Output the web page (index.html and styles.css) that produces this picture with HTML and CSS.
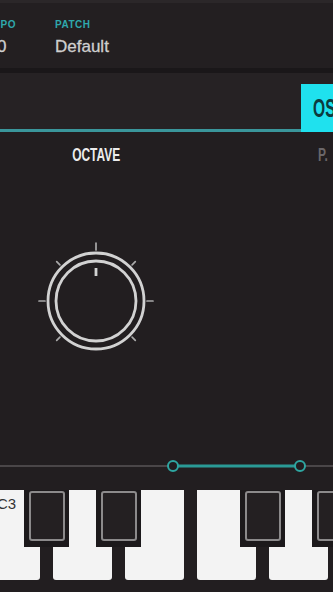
FILE: index.html
```html
<!DOCTYPE html>
<html>
<head>
<meta charset="utf-8">
<link rel="stylesheet" href="styles.css">
</head>
<body>
<div class="screen">
  <header class="header">
    <div class="field field-tempo">
      <div class="field-label">TEMPO</div>
      <div class="field-value">120</div>
    </div>
    <div class="field">
      <div class="field-label">PATCH</div>
      <div class="field-value">Default</div>
    </div>
  </header>
  <div class="divider"></div>
  <nav class="tabbar">
    <div class="tab tab-active"><span class="tab-text">OSC</span></div>
  </nav>
  <main class="main">
    <div class="params">
      <div class="param">
        <div class="param-label"><span class="cond">OCTAVE</span></div>
        <svg class="knob" width="120" height="120" viewBox="0 0 120 120">
          <g stroke="#a9a9a9" stroke-width="1.7" stroke-linecap="round">
            <line x1="60" y1="9" x2="60" y2="2"/>
            <line x1="23.9" y1="23.9" x2="20.7" y2="20.7"/>
            <line x1="96.1" y1="23.9" x2="99.3" y2="20.7"/>
            <line x1="9" y1="60" x2="3" y2="60"/>
            <line x1="111" y1="60" x2="117" y2="60"/>
            <line x1="23.9" y1="96.1" x2="20.7" y2="99.3"/>
            <line x1="96.1" y1="96.1" x2="99.3" y2="99.3"/>
          </g>
          <circle cx="60" cy="60" r="48" fill="none" stroke="#d2d2d2" stroke-width="2.8"/>
          <circle cx="60" cy="60" r="40" fill="none" stroke="#d2d2d2" stroke-width="2.8"/>
          <line x1="60" y1="27" x2="60" y2="35" stroke="#d2d2d2" stroke-width="2.8"/>
        </svg>
      </div>
      <div class="param param-second">
        <div class="param-label param-label-dim"><span class="cond">P.</span></div>
      </div>
    </div>
    <svg class="range" width="333" height="14" viewBox="0 0 333 14">
      <line x1="0" y1="7" x2="333" y2="7" stroke="#4a4648" stroke-width="2"/>
      <line x1="173" y1="7" x2="300" y2="7" stroke="#2a9a96" stroke-width="3"/>
      <circle cx="173" cy="7" r="5" fill="#211d1f" stroke="#2ea6a1" stroke-width="2"/>
      <circle cx="300" cy="7" r="5" fill="#211d1f" stroke="#2ea6a1" stroke-width="2"/>
    </svg>
    <div class="keyboard">
      <div class="white-key"><span class="note">C3</span></div>
      <div class="white-key"></div>
      <div class="white-key"></div>
      <div class="white-key"></div>
      <div class="white-key"></div>
      <div class="black-key bk1"><div class="black-inner"></div></div>
      <div class="black-key bk2"><div class="black-inner"></div></div>
      <div class="black-key bk3"><div class="black-inner"></div></div>
      <div class="black-key bk4"><div class="black-inner"></div></div>
    </div>
  </main>
</div>
</body>
</html>
```

FILE: styles.css
```css
html, body {
  margin: 0;
  padding: 0;
  background: #221e20;
}

.screen {
  width: 333px;
  height: 592px;
  overflow: hidden;
  background: #221e20;
  font-family: "Liberation Sans", Arial, sans-serif;
}

.header {
  height: 68px;
  box-sizing: border-box;
  border-top: 3px solid #2b2729;
  background: #231f21;
  padding-top: 16px;
  display: flex;
}

.field-tempo {
  margin-left: -22px;
  width: 77px;
  flex: none;
}

.field-label {
  font-size: 10px;
  line-height: 12px;
  font-weight: bold;
  letter-spacing: 0.5px;
  color: #2fa8ac;
}

.field-value {
  margin-top: 6px;
  font-size: 17px;
  line-height: 20px;
  color: #cfcfcf;
  -webkit-text-stroke: 0.3px #cfcfcf;
}

.divider {
  height: 5px;
  background: #1a1719;
}

.tabbar {
  height: 59px;
  box-sizing: border-box;
  background: #262224;
  border-bottom: 3px solid #3a969b;
  display: flex;
  justify-content: flex-end;
  align-items: flex-end;
}

.tab {
  height: 48px;
  margin-bottom: -3px;
  width: 62px;
  margin-right: -30px;
  box-sizing: border-box;
  padding-left: 12px;
  display: flex;
  align-items: center;
  background: #1fe1ee;
  flex: none;
}

.tab-text {
  display: inline-block;
  font-size: 26px;
  font-weight: bold;
  color: #0c3a3e;
  transform: scaleX(0.6);
  transform-origin: left center;
}

.main {
  padding-top: 13px;
  display: flex;
  flex-direction: column;
}

.params {
  display: flex;
  height: 216px;
}

.param {
  width: 120px;
  margin-left: 36px;
  display: flex;
  flex-direction: column;
  align-items: center;
  flex: none;
}

.param-second {
  margin-left: 162px;
  width: 40px;
  align-items: flex-start;
}

.param-label {
  height: 20px;
  font-size: 19px;
  line-height: 20px;
  font-weight: bold;
  color: #ececec;
  white-space: nowrap;
}

.param-label-dim {
  color: #6b6769;
}

.cond {
  display: inline-block;
  transform: scaleX(0.63);
}

.param-second .cond {
  transform-origin: left center;
}

.knob {
  display: block;
  margin-top: 76px;
}

.range {
  display: block;
  margin-top: 98px;
}

.keyboard {
  position: relative;
  margin-top: 17px;
  margin-left: -19px;
  height: 90px;
  display: flex;
  gap: 13px;
}

.white-key {
  width: 59px;
  flex: none;
  height: 90px;
  background: #f3f3f3;
  border-radius: 0 0 3px 3px;
  box-sizing: border-box;
  padding: 5px 0 0 16px;
}

.note {
  font-size: 15px;
  line-height: 16px;
  color: #333;
}

.black-key {
  position: absolute;
  top: 0;
  width: 45px;
  height: 57px;
  box-sizing: border-box;
  padding: 1px 4px 6px 5px;
  background: #1c191b;
}

.bk1 { left: 43px; }
.bk2 { left: 115px; }
.bk3 { left: 259px; }
.bk4 { left: 331px; }

.black-inner {
  height: 100%;
  box-sizing: border-box;
  border: 2px solid #8c8a8b;
  border-radius: 3px;
  background: #242022;
}
```
